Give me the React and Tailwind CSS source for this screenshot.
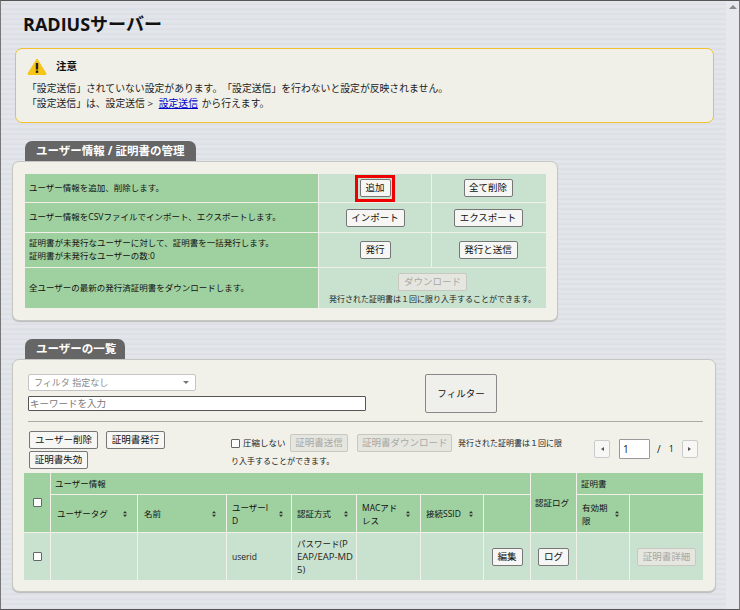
function Btn({ children, className = "", disabled = false }) {
  return (
    <button
      className={
        "inline-flex items-center justify-center whitespace-nowrap rounded-[2px] border text-[9.5px] leading-none " +
        (disabled
          ? "border-[#c8c8c0] bg-[#e6e6e0] text-[#a8a8a4] "
          : "border-[#77777a] bg-[#f6f6f4] text-[#111] ") +
        className
      }
    >
      {children}
    </button>
  );
}

function Tab({ children, className = "" }) {
  return (
    <div className={"flex h-[20px] items-center rounded-t-[7px] bg-[#666666] pl-[11px] text-[11.5px] font-bold leading-none text-white " + className}>
      {children}
    </div>
  );
}

function Sort() {
  return (
    <svg width="4" height="6" viewBox="0 0 4 6" className="shrink-0">
      <path d="M2 0 L4 2.3 H0 Z M2 6 L0 3.7 H4 Z" fill="#333" />
    </svg>
  );
}

function Th({ children, className = "", ...rest }) {
  return (
    <th {...rest} className={"border border-[#f1f1ea] bg-[#9fd0a0] p-0 text-left align-middle text-[8.5px] font-normal leading-[13px] text-[#111] " + className}>
      {children}
    </th>
  );
}

function SortTh({ children, pad = "pl-[6px] pr-[10px]" }) {
  return (
    <Th>
      <div className={"flex items-center justify-between gap-[4px] " + pad}>
        <span className="break-all">{children}</span>
        <Sort />
      </div>
    </Th>
  );
}

function Td({ children, className = "", ...rest }) {
  return (
    <td {...rest} className={"border border-[#f1f1ea] bg-[#c9e2d0] p-0 align-middle text-[8.5px] leading-[13px] text-[#222] " + className}>
      {children}
    </td>
  );
}

function Box() {
  return <span className="block h-[9px] w-[9px] shrink-0 rounded-[1px] border border-[#666] bg-white" />;
}

export default function App() {
  return (
    <div
      className="flex h-[610px] w-[740px] overflow-hidden border-x border-y border-x-[#777] border-y-[#555] bg-[repeating-linear-gradient(180deg,#e2e5ea_0px,#e2e5ea_2px,#d9dce2_3px,#e6e8ec_5px)] text-[#111] [text-spacing-trim:space-all]"
      style={{ fontFamily: '"Open Sans", "Noto Sans CJK JP", "Noto Sans", sans-serif' }}
    >
      <main className="w-[725px] shrink-0 pl-[11px] pr-[8px]">
        <h1 className="ml-[11px] mt-[13px] h-[21px] text-[18px] font-bold leading-[21px] text-[#111]">RADIUSサーバー</h1>

        <section className="ml-[3px] mt-[13px] h-[75px] w-[699px] rounded-[7px] border border-[#f0c030] bg-[#f0f0e9] pl-[11px] pt-[9px]">
          <div className="flex h-[17px] items-center gap-[9px]">
            <svg width="20" height="17" viewBox="0 0 20 17">
              <path d="M10 1 L19 15.5 Q19.3 16.5 18 16.5 H2 Q.7 16.5 1 15.5 Z" fill="#f5c518" stroke="#f5c518" strokeLinejoin="round" />
              <rect x="8.8" y="5" width="2.4" height="6.5" fill="#222" />
              <rect x="8.8" y="12.5" width="2.4" height="2.4" fill="#222" />
            </svg>
            <span className="text-[10.5px] font-bold leading-none">注意</span>
          </div>
          <p className="mt-[6px] text-[9.83px] leading-[15px] text-[#222]">「設定送信」されていない設定があります。「設定送信」を行わないと設定が反映されません。</p>
          <p className="text-[9.83px] leading-[15px] text-[#222]">
            「設定送信」は、設定送信 &gt; <a href="#" className="ml-[3px] mr-[1px] text-[#0000cc] underline">設定送信</a> から行えます。
          </p>
        </section>

        <Tab className="ml-[13px] mt-[18px] w-[171px]">ユーザー情報 / 証明書の管理</Tab>
        <section className="h-[160px] w-[546px] rounded-[7px] border border-[#c6c6c2] bg-[#f1f1ea] pl-[11px] pt-[11px] shadow-[0_1px_1px_#bbb]">
          <table className="w-[522px] table-fixed border-collapse">
            <colgroup>
              <col className="w-[294px]" />
              <col className="w-[113px]" />
              <col className="w-[115px]" />
            </colgroup>
            <tbody>
              <tr className="h-[29px]">
                <Th className="pb-[2px] pl-[4px]">ユーザー情報を追加、削除します。</Th>
                <Td className="text-center">
                  <span className="inline-flex h-[27px] w-[40px] items-center justify-center border-[3px] border-[#ee0000] align-middle">
                    <Btn className="h-[18px] w-[31px]">追加</Btn>
                  </span>
                </Td>
                <Td className="pr-[2px] text-center"><Btn className="h-[18px] w-[49px]">全て削除</Btn></Td>
              </tr>
              <tr className="h-[30px]">
                <Th className="pb-[2px] pl-[4px]">ユーザー情報をCSVファイルでインポート、エクスポートします。</Th>
                <Td className="text-center"><Btn className="h-[18px] w-[59px]">インポート</Btn></Td>
                <Td className="pr-[2px] text-center"><Btn className="h-[18px] w-[69px]">エクスポート</Btn></Td>
              </tr>
              <tr className="h-[35px]">
                <Th className="pb-[2px] pl-[4px]">
                  証明書が未発行なユーザーに対して、証明書を一括発行します。
                  <br />
                  証明書が未発行なユーザーの数:0
                </Th>
                <Td className="text-center"><Btn className="h-[18px] w-[31px]">発行</Btn></Td>
                <Td className="pr-[2px] text-center"><Btn className="h-[18px] w-[59px]">発行と送信</Btn></Td>
              </tr>
              <tr className="h-[41px]">
                <Th className="pb-[2px] pl-[4px]">全ユーザーの最新の発行済証明書をダウンロードします。</Th>
                <Td className="text-center" colSpan={2}>
                  <div className="flex flex-col items-center gap-[2px]">
                    <Btn disabled className="h-[18px] w-[69px]">ダウンロード</Btn>
                    <span className="whitespace-nowrap text-[8px] leading-[11px] text-[#222]">発行された証明書は１回に限り入手することができます。</span>
                  </div>
                </Td>
              </tr>
            </tbody>
          </table>
        </section>

        <Tab className="ml-[13px] mt-[18px] w-[100px]">ユーザーの一覧</Tab>
        <section className="h-[233px] w-[704px] rounded-[7px] border border-[#c6c6c2] bg-[#f1f1ea] pl-[11px] pr-[12px] pt-[14px] shadow-[0_1px_1px_#bbb]">
          <div className="flex pl-[4px]">
            <div className="w-[338px]">
              <div className="flex h-[17px] w-[168px] items-center justify-between rounded-[2px] border border-[#c4c4c4] bg-white pl-[5px] pr-[6px] text-[9px] text-[#888]">
                フィルタ 指定なし
                <span className="h-0 w-0 border-x-[3px] border-t-[3px] border-x-transparent border-t-[#777]" />
              </div>
              <input
                readOnly
                placeholder="キーワードを入力"
                className="mt-[5px] block h-[15px] w-[338px] rounded-[1px] border border-[#555] bg-white pl-[1px] text-[9.5px] placeholder:text-[#777]"
              />
            </div>
            <Btn className="ml-[59px] h-[39px] w-[72px] !border-[#888] !bg-[#efefec]">フィルター</Btn>
          </div>

          <hr className="ml-[4px] mt-[8px] w-[675px] border-t border-[#aaaaa6]" />

          <div className="mt-[9px] flex pl-[5px]">
            <div className="flex w-[146px] flex-wrap content-start gap-x-[8px] gap-y-[2px]">
              <Btn className="h-[18px] w-[69px]">ユーザー削除</Btn>
              <Btn className="h-[18px] w-[59px]">証明書発行</Btn>
              <Btn className="h-[18px] w-[59px]">証明書失効</Btn>
            </div>
            <div className="ml-[56px] w-[331px] pt-[3px] text-[8px] leading-[18px] text-[#222]">
              <div className="flex h-[18px] items-center">
                <Box />
                <span className="ml-[3px] mr-[4px] whitespace-nowrap text-[8.5px]">圧縮しない</span>
                <Btn disabled className="h-[18px] w-[59px]">証明書送信</Btn>
                <Btn disabled className="ml-[9px] h-[18px] w-[95px]">証明書ダウンロード</Btn>
                <span className="ml-[6px] whitespace-nowrap">発行された証明書は１回に限</span>
              </div>
              り入手することができます。
            </div>
            <div className="ml-[32px] mt-[8px] flex h-[20px] items-center">
              <button className="flex h-[18px] w-[16px] items-center justify-center rounded-[2px] border border-[#ccc] bg-[#f7f7f5]">
                <span className="h-0 w-0 border-y-[2.5px] border-r-[3px] border-y-transparent border-r-[#555]" />
              </button>
              <input readOnly value="1" className="ml-[9px] h-[20px] w-[31px] rounded-[1px] border border-[#999] bg-white pl-[3px] text-[10px]" />
              <span className="ml-[7px] text-[10px]">/</span>
              <span className="ml-[8px] text-[9px]">1</span>
              <button className="ml-[8px] flex h-[18px] w-[16px] items-center justify-center rounded-[2px] border border-[#ccc] bg-[#f7f7f5]">
                <span className="h-0 w-0 border-y-[2.5px] border-l-[3px] border-y-transparent border-l-[#555]" />
              </button>
            </div>
          </div>

          <table className="-ml-px mt-[2px] w-[680px] table-fixed border-collapse">
            <colgroup>
              <col className="w-[27px]" />
              <col className="w-[87px]" />
              <col className="w-[89px]" />
              <col className="w-[65px]" />
              <col className="w-[65px]" />
              <col className="w-[64px]" />
              <col className="w-[63px]" />
              <col className="w-[47px]" />
              <col className="w-[46px]" />
              <col className="w-[53px]" />
              <col className="w-[74px]" />
            </colgroup>
            <thead>
              <tr className="h-[22px]">
                <Th rowSpan={2}><div className="flex justify-center"><Box /></div></Th>
                <Th colSpan={7} className="pl-[4px]">ユーザー情報</Th>
                <Th rowSpan={2} className="pl-[4px]">認証ログ</Th>
                <Th colSpan={2} className="pl-[4px]">証明書</Th>
              </tr>
              <tr className="h-[38px]">
                <SortTh>ユーザータグ</SortTh>
                <SortTh>名前</SortTh>
                <SortTh pad="pl-[5px] pr-[8px]">ユーザーI<br />D</SortTh>
                <SortTh pad="pl-[5px] pr-[8px]">認証方式</SortTh>
                <SortTh pad="pl-[5px] pr-[10px]">MACアドレス</SortTh>
                <SortTh pad="pl-[5px] pr-[10px]">接続SSID</SortTh>
                <Th />
                <SortTh pad="pl-[5px] pr-[10px]">有効期限</SortTh>
                <Th />
              </tr>
            </thead>
            <tbody>
              <tr className="h-[48px]">
                <Td><div className="flex justify-center"><Box /></div></Td>
                <Td />
                <Td />
                <Td className="pl-[5px]">userid</Td>
                <Td className="pl-[5px] whitespace-nowrap">
                  パスワード(<span className="text-[9.5px]">P</span>
                  <br />
                  <span className="text-[9.5px]">EAP/EAP-MD</span>
                  <br />
                  <span className="text-[9.5px]">5)</span>
                </Td>
                <Td />
                <Td />
                <Td className="text-center"><Btn className="h-[18px] w-[31px]">編集</Btn></Td>
                <Td className="text-center"><Btn className="h-[18px] w-[31px]">ログ</Btn></Td>
                <Td />
                <Td className="text-center"><Btn disabled className="h-[18px] w-[59px]">証明書詳細</Btn></Td>
              </tr>
            </tbody>
          </table>
        </section>
      </main>
      <div className="flex flex-1 justify-center bg-[#e6e8ed] pt-[4px]">
        <span className="h-0 w-0 border-x-[4px] border-b-[4px] border-x-transparent border-b-[#888]" />
      </div>
    </div>
  );
}
